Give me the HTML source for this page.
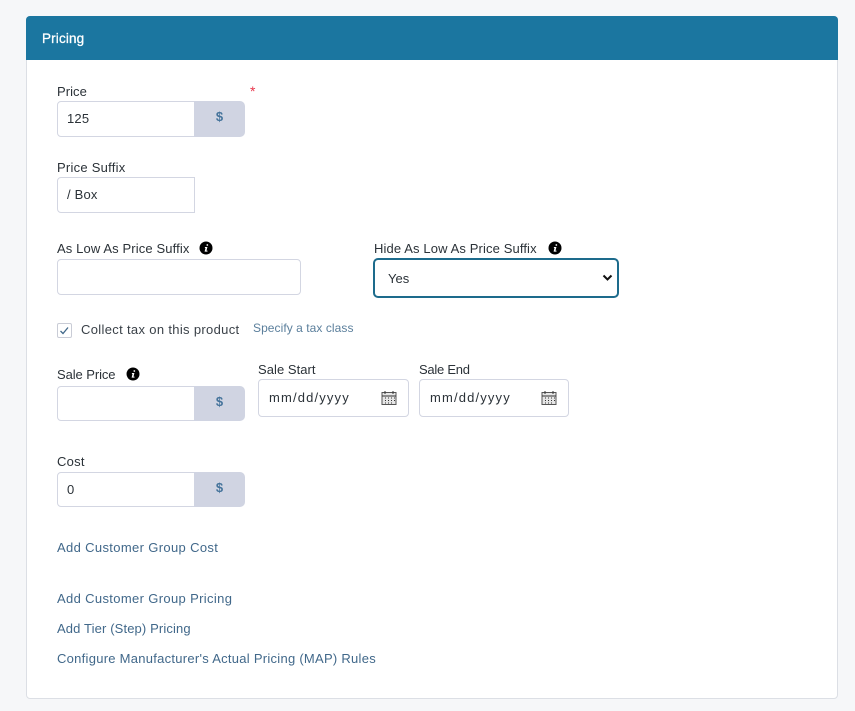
<!DOCTYPE html>
<html><head><meta charset="utf-8"><style>
html,body{margin:0;padding:0;background:#f6f7f9;}
body{width:855px;height:711px;position:relative;overflow:hidden;font-family:"Liberation Sans",Arial,sans-serif;font-size:13px;color:#2b3238;}
.a{position:absolute;white-space:nowrap;line-height:18px;}
.card{position:absolute;left:26px;top:16px;width:811px;height:681px;background:#fff;border:1px solid #dcdfe5;border-radius:4px;box-sizing:content-box;}
.head{position:absolute;left:26px;top:16px;width:812px;height:44px;background:#1b76a0;border-radius:4px 4px 0 0;}
.box{position:absolute;box-sizing:border-box;background:#fff;border:1px solid #d3d6e2;border-radius:4px;}
.add{position:absolute;box-sizing:border-box;background:#d0d4e2;border-radius:0 5px 5px 0;color:#44739b;font-weight:bold;text-align:center;font-size:13px;}
.l{color:#41688a;}
</style></head><body>
<div class="card" style="width:810px"></div>
<div class="head"></div>
<div class="a" style="left:42px;top:30px;color:#fff;font-size:13.5px;letter-spacing:.15px;-webkit-text-stroke:.3px #fff">Pricing</div>

<div class="a" style="left:57px;top:83px;letter-spacing:.05px">Price</div>
<div class="a" style="left:250px;top:82px;color:#e8354a;font-size:14px">*</div>
<div class="box" style="left:57px;top:101px;width:138px;height:36px;border-radius:4px 0 0 4px"></div>
<div class="add" style="left:194px;top:101px;width:51px;height:36px;line-height:32px">$</div>
<div class="a" style="left:67px;top:110px;letter-spacing:.2px">125</div>

<div class="a" style="left:57px;top:159px;letter-spacing:.25px">Price Suffix</div>
<div class="box" style="left:57px;top:177px;width:138px;height:36px;border-radius:4px 0 0 4px"></div>
<div class="a" style="left:67px;top:186px;letter-spacing:.2px">/ Box</div>

<div class="a" style="left:57px;top:240px;letter-spacing:.12px">As Low As Price Suffix</div>
<svg class="a" style="left:199px;top:241px" width="14" height="14" viewBox="0 0 14 14"><circle cx="7" cy="7" r="6.5" fill="#000"/><path d="M7.6 3.2h1.5v1.5H7.6zM6 6h2.4l-.9 3.6h1v1H5.6l.9-3.6h-.7z" fill="#fff"/></svg>
<div class="box" style="left:57px;top:259px;width:244px;height:36px"></div>

<div class="a" style="left:374px;top:240px;letter-spacing:.12px">Hide As Low As Price Suffix</div>
<svg class="a" style="left:548px;top:241px" width="14" height="14" viewBox="0 0 14 14"><circle cx="7" cy="7" r="6.5" fill="#000"/><path d="M7.6 3.2h1.5v1.5H7.6zM6 6h2.4l-.9 3.6h1v1H5.6l.9-3.6h-.7z" fill="#fff"/></svg>
<div class="box" style="left:373px;top:258px;width:246px;height:40px;border:2px solid #1d6b8c;border-radius:5px"></div>
<div class="a" style="left:388px;top:270px;letter-spacing:0">Yes</div>
<svg class="a" style="left:602px;top:274px" width="11" height="8" viewBox="0 0 11 8"><path d="M1.5 1.5l4 4 4-4" fill="none" stroke="#111" stroke-width="2"/></svg>

<div class="box" style="left:57px;top:323px;width:15px;height:15px;border-color:#c9ccd6;border-radius:2px"></div>
<svg class="a" style="left:59px;top:325px" width="11" height="11" viewBox="0 0 11 11"><path d="M1.5 6l2.5 2.5 5-6" fill="none" stroke="#41688a" stroke-width="1.3"/></svg>
<div class="a" style="left:81px;top:321px;letter-spacing:.33px;color:#3a4148">Collect tax on this product</div>
<div class="a l" style="left:253px;top:319px;font-size:12px;letter-spacing:.06px;color:#5b7f9c">Specify a tax class</div>

<div class="a" style="left:57px;top:366px;letter-spacing:-.08px">Sale Price</div>
<svg class="a" style="left:126px;top:367px" width="14" height="14" viewBox="0 0 14 14"><circle cx="7" cy="7" r="6.5" fill="#000"/><path d="M7.6 3.2h1.5v1.5H7.6zM6 6h2.4l-.9 3.6h1v1H5.6l.9-3.6h-.7z" fill="#fff"/></svg>
<div class="box" style="left:57px;top:386px;width:138px;height:35px;border-radius:4px 0 0 4px"></div>
<div class="add" style="left:194px;top:386px;width:51px;height:35px;line-height:32px">$</div>

<div class="a" style="left:258px;top:361px;letter-spacing:.05px">Sale Start</div>
<div class="box" style="left:258px;top:379px;width:151px;height:38px"></div>
<div class="a" style="left:269px;top:389px;letter-spacing:1.15px">mm/dd/yyyy</div>
<svg class="a" style="left:381px;top:390px" width="16" height="16" viewBox="0 0 16 16"><rect x="1" y="2.5" width="14" height="12" fill="#e6e6e6" stroke="#555" stroke-width="1"/><path d="M1 6h14M4 1v3M12 1v3M4 8h1M7 8h1M10 8h1M13 8h1M4 10.5h1M7 10.5h1M10 10.5h1M13 10.5h1M4 13h1M7 13h1M10 13h1" stroke="#333" fill="none"/></svg>

<div class="a" style="left:419px;top:361px;letter-spacing:-.25px">Sale End</div>
<div class="box" style="left:419px;top:379px;width:150px;height:38px"></div>
<div class="a" style="left:430px;top:389px;letter-spacing:1.15px">mm/dd/yyyy</div>
<svg class="a" style="left:541px;top:390px" width="16" height="16" viewBox="0 0 16 16"><rect x="1" y="2.5" width="14" height="12" fill="#e6e6e6" stroke="#555" stroke-width="1"/><path d="M1 6h14M4 1v3M12 1v3M4 8h1M7 8h1M10 8h1M13 8h1M4 10.5h1M7 10.5h1M10 10.5h1M13 10.5h1M4 13h1M7 13h1M10 13h1" stroke="#333" fill="none"/></svg>

<div class="a" style="left:57px;top:453px;letter-spacing:.25px">Cost</div>
<div class="box" style="left:57px;top:472px;width:138px;height:35px;border-radius:4px 0 0 4px"></div>
<div class="add" style="left:194px;top:472px;width:51px;height:35px;line-height:32px">$</div>
<div class="a" style="left:67px;top:481px;letter-spacing:.2px">0</div>

<div class="a l" style="left:57px;top:539px;letter-spacing:.35px">Add Customer Group Cost</div>
<div class="a l" style="left:57px;top:590px;letter-spacing:.35px">Add Customer Group Pricing</div>
<div class="a l" style="left:57px;top:620px;letter-spacing:.13px">Add Tier (Step) Pricing</div>
<div class="a l" style="left:57px;top:650px;letter-spacing:.27px">Configure Manufacturer's Actual Pricing (MAP) Rules</div>
</body></html>
